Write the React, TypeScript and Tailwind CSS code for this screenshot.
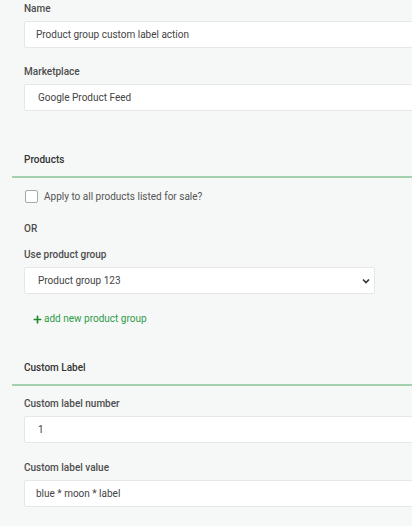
import { FaPlus } from "react-icons/fa";

const Field = ({
  label,
  value,
  indent = 11,
}: {
  label: string;
  value: string;
  indent?: number;
}) => (
  <div className="flex flex-col">
    <label className="text-[10px] font-medium text-[#4d4d4d] leading-[12px] mb-[6px]">
      {label}
    </label>
    <div
      className="h-[27px] -mr-[20px] bg-white border border-[#e6e8e7] rounded-[2px] flex items-center text-[10px] text-[#444]"
      style={{ paddingLeft: indent }}
    >
      {value}
    </div>
  </div>
);

const SectionHeader = ({ title }: { title: string }) => (
  <div className="-ml-[12px] -mr-[20px] border-b-2 border-[#a6d1b1] pl-[12px] pb-[10px] text-[10px] leading-[12px] font-medium text-[#333]">
    {title}
  </div>
);

export default function App() {
  return (
    <div
      className="w-[412px] h-[526px] overflow-hidden bg-[#f6f8f7] pl-[24px] pt-[3px]"
      style={{ fontFamily: "Roboto, 'Liberation Sans', sans-serif" }}
    >
      <div className="flex flex-col">
        <Field label="Name" value="Product group custom label action" />
        <div className="h-[18px]" />
        <Field label="Marketplace" value="Google Product Feed" indent={13} />
        <div className="h-[43px]" />
        <SectionHeader title="Products" />
        <label className="flex items-center mt-[12px] h-[13px]">
          <span className="w-[13px] h-[13px] ml-[1px] bg-white border border-[#a8a8a8] rounded-[2px]" />
          <span className="ml-[6px] text-[10px] text-[#555]">
            Apply to all products listed for sale?
          </span>
        </label>
        <div className="mt-[20px] text-[10px] leading-[12px] font-medium text-[#4d4d4d]">OR</div>
        <label className="mt-[14px] text-[10px] font-medium text-[#4d4d4d] leading-[12px] mb-[6px]">
          Use product group
        </label>
        <div className="w-[351px] h-[27px] bg-white border border-[#e6e8e7] rounded-[2px] flex items-center justify-between pl-[13px] pr-[3px] text-[10px] text-[#444]">
          <span>Product group 123</span>
          <svg width="8" height="6" viewBox="0 0 8 6" className="mr-[1px]">
            <path d="M1 1.5 L4 4.5 L7 1.5" stroke="#333" strokeWidth="1.6" fill="none" />
          </svg>
        </div>
        <div className="mt-[19px] ml-[9px] flex items-center text-[10px] leading-[12px] text-[#2e9b48]">
          <FaPlus className="w-[9px] h-[9px] text-[#1f8a2f] mr-[2px]" />
          add new product group
        </div>
        <div className="h-[37px]" />
        <SectionHeader title="Custom Label" />
        <div className="h-[12px]" />
        <Field label="Custom label number" value="1" indent={13} />
        <div className="h-[19px]" />
        <Field label="Custom label value" value="blue * moon * label" />
      </div>
    </div>
  );
}
